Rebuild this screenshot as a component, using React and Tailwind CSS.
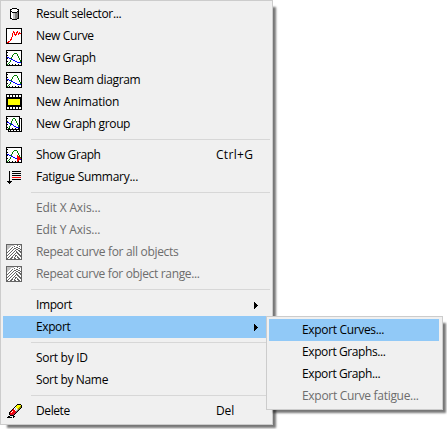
import React from "react";

const C = {
  k: "#000000", w: "#ffffff", r: "#ff0000", g: "#008000", b: "#0000ff",
  y: "#ffff00", s: "#c0c0c0", d: "#808080", m: "#d01030", o: "#909000", n: "#666666",
};

function Pixels({ rows }) {
  const rects = [];
  rows.forEach((row, y) => {
    let x = 0;
    while (x < row.length) {
      const c = row[x];
      let end = x + 1;
      while (end < row.length && row[end] === c) end++;
      if (C[c]) rects.push(<rect key={`${x}-${y}`} x={x} y={y} width={end - x} height="1" fill={C[c]} />);
      x = end;
    }
  });
  return <svg className="block h-4 w-4" viewBox="0 0 16 16" shapeRendering="crispEdges">{rects}</svg>;
}

const cylinder = [
  "................", "................", "......kkkkk.....", "....kkwwwwwkk...",
  "....kwwwwwwwk...", "....kkwwwwwkk...", "....kwkkkkkdk...", "....kwwssdddk...",
  "....kwwssdddk...", "....kwwssdddk...", "....kwwssdddk...", "....kwwssdddk...",
  "....kkwssddkk...", "......kkkkk.....", "................", "................",
];
const curve = [
  "kkkkkkkkkkkkkkkk", "kwwwwwwwwwwwwwwk", "kwwwwwwwwwwwwwwk", "kwwwwwwrwwwrwwwk",
  "kwwwwwwrrwrrwrwk", "kwwwwwrwrwrwrrrk", "kwwwwwrwrrrwrwwk", "kwwwwwrwwrwwwwwk",
  "kwwwwwrwwwwwwwwk", "kwwwwrwwwwwwwwwk", "kwwwwrwwwwwwwwwk", "kwwwrrwwwwwwwwwk",
  "kwwwrwwwwwwwwwwk", "kwrrwwwwwwwwwwwk", "krrwwwwwwwwwwwwk", "kkkkkkkkkkkkkkkk",
];
const graph = [
  "kkkkkkkkkkkkkkkk", "kwwwwwwwwwwwwwwk", "kkwwwwwwwwwwwwwk", "kwwwwwwwgggwwwwk",
  "kwwwwwwgwwwgwwwk", "kkwwwwgwwwwgwwwk", "kwwwwwgwwwwwgwwk", "kbbwwgwwwwwwgwwk",
  "kkwbbgwwwwwwwgwk", "kwwwwbbwwwwwwgwk", "kwwwgwwbbwwwwwgk", "kkwwgwwwwbbwwwgk",
  "kwwgwwwwwwwbbbbk", "kwgwwwwwwwwwwwwk", "kgwkwwkwwkwwkwwk", "kkkkkkkkkkkkkkkk",
];
const show = graph.map((row, y) => {
  const marks = { 8: "r", 9: "rr", 10: "rrr", 11: "rrrr", 12: "rrr", 13: "rr", 14: "r" };
  const mark = marks[y];
  return mark ? row.slice(0, 11) + mark + row.slice(11 + mark.length) : row;
});
const film = [
  "kkkkkkkkkkkkkkkk", "kwwkwwkwwkwwkwwk", "kwwkwwkwwkwwkwwk", "kkkkkkkkkkkkkkkk",
  "kkkkkkkkkkkkkkkk", "kkyyyyyyyyyyyykk", "kkyyyyyyyyyyyykk", "kkyyyyyyyyyyyykk",
  "kkyyyyyyyyyyyykk", "kkyyyyyyyyyyyykk", "kkyyyyyyyyyyyykk", "kkkkkkkkkkkkkkkk",
  "kkkkkkkkkkkkkkkk", "kwwkwwkwwkwwkwwk", "kwwkwwkwwkwwkwwk", "kkkkkkkkkkkkkkkk",
];
const group = [
  "kkkkkkkkkkkkkk..", "kwwwwwwwwwwwwk..", "kkwwwwwggwwwwkkk", "kwwwwwgwwgwwwkwk",
  "kwwwwwgwwgwwwkwk", "kkwwwgwwwwgwwkwk", "kbbwwgwwwwgwwkwk", "kwwbbgwwwwwgwkwk",
  "kkwwgbbwwwwgwkwk", "kwwwgwwbwwwwgkwk", "kwwgwwwwbbwwgkwk", "kkwgwwwwwwbbbkwk",
  "kwgkwwkwwkwwkkwk", "kkkkkkkkkkkkkkwk", "..kwkwwkwwkwwkwk", "..kkkkkkkkkkkkkk",
];
const summary = [
  "................", "................", "...k..kkkkkkkkk.", "...k............",
  "...k..kkkkkkkkk.", "...k............", "...k..kkkkkkkkk.", "...k............",
  "...k..rrrrrrrrr.", "...k............", "...k..kkkkkkkkk.", "...k............",
  ".kkkkk..........", "..kkk...........", "...k............", "................",
];
const repeat = [
  "nnnnnnnnnnnnnnnn", "nssssssswwwnwwsn", "nsssswwwnwwwwnwn", "nssswwnwwwnnwwwn",
  "nsswwnwwnnwwnnwn", "nswwnwwnwwnnwwnn", "nwwnwwnwwnwwnnwn", "nwnwwnwwnwnwwnnn",
  "nnwwnwwnwwnnwwnn", "nwwnwwnwwnwnnwwn", "nwnwwnwwnwwwnnwn", "nnwwnwwnwnnwwnnn",
  "nwwnwwnwwnwnwwnn", "nwnwwnnwnwwnnwwn", "nnwwnnwwnnwwnnwn", "nnnnnnnnnnnnnnnn",
];
const eraser = [
  "................", "...........kkkk.", "..........kyyyyk", ".........kyyyyok",
  "........kwyyyook", ".......kwswyook.", "......krwswsok..", ".....krrrwsdk...",
  "....krwrrmdk....", "...krwrrmmk.....", "...krrrmmk......", "...kmmmmk.......",
  "....kkkk........", "..kk...kk.......", ".kkkkk.k........", "................",
];

function Row({ icon, label, shortcut, arrow, disabled, active, track = "tracking-[-0.34px]", shortcutTrack = "tracking-[-0.1px]" }) {
  return (
    <div className={`flex h-[22px] items-center ${active ? "bg-[#91c9f7]" : ""} ${disabled ? "text-[#6d6d6d]" : "text-black"}`}>
      <span className="ml-[3px] w-[30px] shrink-0">{icon && <Pixels rows={icon} />}</span>
      <span className={`whitespace-nowrap ${track}`}>{label}</span>
      {shortcut && <span className={`ml-auto w-[54px] ${shortcutTrack}`}>{shortcut}</span>}
      {arrow && (
        <svg className="mr-3 ml-auto h-[7px] w-1" viewBox="0 0 4 7" shapeRendering="crispEdges">
          <path d="M0 0h1v1h1v1h1v1h1v1h-1v1h-1v1h-1v1h-1z" />
        </svg>
      )}
    </div>
  );
}

function Separator() {
  return <div className="my-1 ml-7 h-px bg-[#d7d7d7]" />;
}

export default function App() {
  return (
    <div className="relative h-[429px] w-[447px] overflow-hidden bg-white font-['Open_Sans','Noto_Sans',sans-serif] text-[12px] leading-[22px]">
      <div className="h-[425px] w-[273px] border border-[#cccccc] bg-[#f0f0f0] p-0.5 shadow-[5px_5px_2px_-2px_#00000088]">
        <Row icon={cylinder} label="Result selector..." track="tracking-[-0.34px]" />
        <Row icon={curve} label="New Curve" />
        <Row icon={graph} label="New Graph" track="tracking-[-0.4px]" />
        <Row icon={graph} label="New Beam diagram" />
        <Row icon={film} label="New Animation" track="tracking-[-0.2px]" />
        <Row icon={group} label="New Graph group" track="tracking-[-0.37px]" />
        <Separator />
        <Row icon={show} label="Show Graph" shortcut="Ctrl+G" shortcutTrack="tracking-[0.3px]" track="tracking-[-0.4px]" />
        <Row icon={summary} label="Fatigue Summary..." track="tracking-[-0.28px]" />
        <Separator />
        <Row label="Edit X Axis..." disabled track="tracking-[-0.15px]" />
        <Row label="Edit Y Axis..." disabled track="tracking-[-0.15px]" />
        <Row icon={repeat} label="Repeat curve for all objects" disabled track="tracking-[-0.32px]" />
        <Row icon={repeat} label="Repeat curve for object range..." disabled />
        <Separator />
        <Row label="Import" arrow track="tracking-[-0.4px]" />
        <Row label="Export" arrow active track="tracking-[-0.4px]" />
        <Separator />
        <Row label="Sort by ID" track="tracking-[-0.3px]" />
        <Row label="Sort by Name" />
        <Separator />
        <Row icon={eraser} label="Delete" shortcut="Del" track="tracking-[-0.4px]" />
      </div>
      <div className="absolute top-[316px] left-[266px] h-[94px] w-[177px] border border-[#cccccc] bg-[#f0f0f0] py-0.5 pr-[3px] pl-0.5 shadow-[5px_5px_2px_-2px_#00000088]">
        <Row label="Export Curves..." active />
        <Row label="Export Graphs..." track="tracking-[-0.4px]" />
        <Row label="Export Graph..." track="tracking-[-0.4px]" />
        <Row label="Export Curve fatigue..." disabled track="tracking-[-0.3px]" />
      </div>
    </div>
  );
}
